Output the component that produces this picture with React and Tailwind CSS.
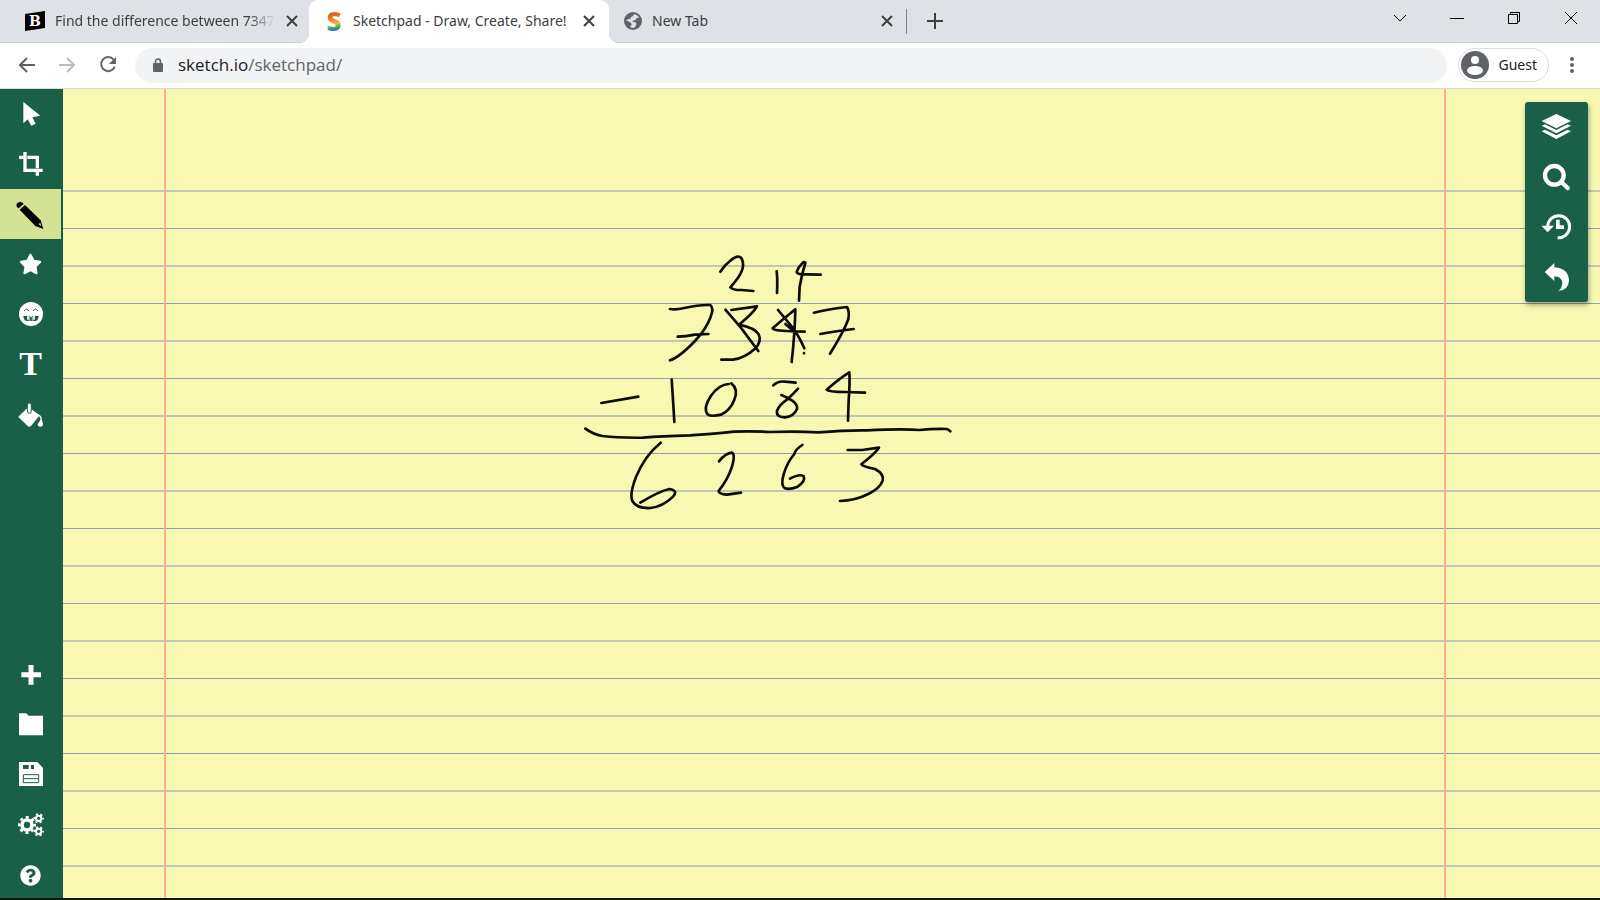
import { FaQuestionCircle, FaStar } from "react-icons/fa";

function ToolIcon({ children }) {
  return (
    <svg viewBox="0 0 81 84" className="w-[27px] h-7 overflow-visible" fill="currentColor">
      {children}
    </svg>
  );
}

function PanelIcon({ children }) {
  return (
    <svg viewBox="0 0 93 90" className="w-[31px] h-[30px]" fill="currentColor">
      {children}
    </svg>
  );
}

const drawTools = [
  {
    name: "Select",
    icon: (
      <ToolIcon>
        <path d="M19 6V70L32 58L43 77L56 71L46 52L70 47Z" />
      </ToolIcon>
    ),
  },
  {
    name: "Crop",
    icon: (
      <ToolIcon>
        <path d="M6 22H20M31 22H61V55M61 66V77M24 6V61H77" fill="none" stroke="currentColor" strokeWidth="10" />
      </ToolIcon>
    ),
  },
  {
    name: "Pencil",
    active: true,
    icon: (
      <ToolIcon>
        <path d="M-2 17Q-1 6 10 6L17 8L20 12L5 25L0 21Z" />
        <path d="M8 29L24 15L71 61L79 87L55 78Z" />
        <path d="M64 72L70 69L73 79Z" fill="#d5e48f" />
      </ToolIcon>
    ),
  },
  { name: "Shapes", icon: <FaStar className="w-[23px] h-[22px]" /> },
  {
    name: "Clipart",
    icon: (
      <ToolIcon>
        <circle cx="42" cy="42" r="36" />
        <g fill="none" stroke="#1a6048" strokeWidth="3" strokeLinecap="round">
          <path d="M22 32Q29 22 35 32M49 32Q56 22 62 32" />
        </g>
        <path d="M19 48H65Q64 63 54 63H30Q20 63 19 48Z" fill="#1a6048" />
        <path d="M33 48V59M42 48V51M51 48V59" stroke="currentColor" strokeWidth="5" />
        <path d="M38 50V63M46 50V63" stroke="currentColor" strokeWidth="2" />
      </ToolIcon>
    ),
  },
  { name: "Text", icon: <span className="font-['Liberation_Serif',serif] font-bold text-[34px] leading-none">T</span> },
  {
    name: "Fill",
    icon: (
      <ToolIcon>
        <path d="M4 50L34 21L68 46L42 78Q37 83 32 78L8 55Q5 52 4 50Z" />
        <rect x="31" y="9" width="12" height="31" rx="6" stroke="#1a6048" strokeWidth="3" />
        <path d="M58 45Q72 44 73 58" fill="none" stroke="currentColor" strokeWidth="4" />
        <path d="M73 54Q67 66 62 72A8 8 0 1 0 78 72Q76 64 73 54Z" />
      </ToolIcon>
    ),
  },
];

const fileTools = [
  {
    name: "New",
    icon: (
      <ToolIcon>
        <path d="M42 12V71M13 41H72" stroke="currentColor" strokeWidth="15" />
      </ToolIcon>
    ),
  },
  {
    name: "Open",
    icon: (
      <ToolIcon>
        <path d="M6 7H28L35 14H78V73H6Z" />
      </ToolIcon>
    ),
  },
  {
    name: "Save",
    icon: (
      <ToolIcon>
        <path d="M6 3H61L78 21V75H6Z" />
        <path d="M18 12H35V24H18ZM42 12H51V24H42Z" fill="#1a6048" />
        <path d="M19 41H65V65H19ZM19 53H65" fill="none" stroke="#1a6048" strokeWidth="3" />
      </ToolIcon>
    ),
  },
  {
    name: "Settings",
    icon: (
      <ToolIcon>
        <g fill="none" stroke="currentColor">
          <circle cx="30" cy="42" r="15" strokeWidth="11" />
          <circle cx="30" cy="42" r="23" strokeWidth="8" strokeDasharray="9.030" strokeDashoffset="4.500" />
          <circle cx="65" cy="22" r="8" strokeWidth="6" />
          <circle cx="65" cy="22" r="13" strokeWidth="5" strokeDasharray="6.800" strokeDashoffset="3.400" />
          <circle cx="65" cy="61" r="8" strokeWidth="6" />
          <circle cx="65" cy="61" r="13" strokeWidth="5" strokeDasharray="6.800" strokeDashoffset="3.400" />
        </g>
      </ToolIcon>
    ),
  },
  { name: "Help", icon: <FaQuestionCircle className="w-[21px] h-[21px]" /> },
];

const panelTools = [
  {
    name: "Layers",
    icon: (
      <PanelIcon>
        <path d="M46 6L90 27L46 49L2 27Z" />
        <path d="M2 41L12 37L46 54L80 37L90 41L46 64Z" />
        <path d="M2 58L12 53L46 70L80 53L90 58L46 81Z" />
      </PanelIcon>
    ),
  },
  {
    name: "Zoom",
    icon: (
      <PanelIcon>
        <g fill="none" stroke="currentColor" strokeWidth="13" strokeLinecap="round">
          <circle cx="40" cy="40" r="28" />
          <path d="M61 60L80 78" />
        </g>
      </PanelIcon>
    ),
  },
  {
    name: "History",
    icon: (
      <PanelIcon>
        <path d="M20 44A33 33 0 1 1 50 77" fill="none" stroke="currentColor" strokeWidth="9" />
        <path d="M1 41H39L20 61Z" />
        <path d="M45 23H56V40H69V51H45Z" />
      </PanelIcon>
    ),
  },
  {
    name: "Undo",
    icon: (
      <PanelIcon>
        <path d="M11 30L40 3V16Q84 20 84 57Q82 84 52 87Q63 79 64 62Q62 44 40 43V57Z" />
      </PanelIcon>
    ),
  },
];

function CloseIcon() {
  return (
    <svg viewBox="0 0 12 12" className="w-3 h-3" fill="none" stroke="#3c4043" strokeWidth="2">
      <path d="M1 1L11 11M11 1L1 11" />
    </svg>
  );
}

function GlobeIcon() {
  return (
    <svg viewBox="0 0 18 18" className="w-[18px] h-[18px] shrink-0">
      <circle cx="9" cy="9" r="9" fill="#5f6368" />
      <path d="M10 2Q14 3 15.500 6Q13 5 12 7Q12 8.500 9 8.500Q8 10 10 10Q12.500 10 12.500 12Q12 15 9 16Q6.500 16 6 14Q8.500 14 7 11Q5 9 2 8.500Q3 7 5 7Q7 7 7 5Q9 5 10 2Z" fill="#dee1e6" />
    </svg>
  );
}

function TabBar() {
  return (
    <header className="flex h-[43px] bg-[#dee1e6] border-b border-[#d0d3d8] text-sm text-[#3c4043]">
      <div className="w-[309px] flex items-center pb-px pl-[25px] pr-[13px]">
        <svg viewBox="0 0 20 20" className="w-5 h-5 shrink-0">
          <path d="M0 3L20 0V17L0 20Z" fill="#000" />
          <text x="10" y="15" textAnchor="middle" fill="#fff" fontSize="14" fontWeight="900" fontFamily="DejaVu Serif, serif">
            B
          </text>
        </svg>
        <span className="ml-[10px] flex-1 whitespace-nowrap [mask-image:linear-gradient(to_right,#000_88%,transparent)]">
          Find the difference between 7347
        </span>
        <button aria-label="Close tab" className="ml-[11px]">
          <CloseIcon />
        </button>
      </div>

      <div className="relative w-[300px] h-[43px] bg-white rounded-t-[9px] flex items-center pb-[2px] pl-[16px] pr-[14px] before:absolute before:bottom-0 before:-left-[9px] before:w-[9px] before:h-[9px] before:bg-[radial-gradient(circle_at_0_0,transparent_9px,white_9px)] after:absolute after:bottom-0 after:-right-[9px] after:w-[9px] after:h-[9px] after:bg-[radial-gradient(circle_at_100%_0,transparent_9px,white_9px)]">
        <span className="w-[18px] text-center font-['Open_Sans',sans-serif] font-extrabold text-[26px] leading-none text-transparent bg-clip-text bg-[linear-gradient(170deg,#e2662a_30%,#ee8a2b_45%,#f0bc35_60%,#6fb04a_70%,#2d7fc4_78%)]">
          S
        </span>
        <span className="ml-[10px] flex-1 whitespace-nowrap">Sketchpad - Draw, Create, Share!</span>
        <button aria-label="Close tab">
          <CloseIcon />
        </button>
      </div>

      <div className="w-[297px] flex items-center pb-px pl-[15px] pr-[13px]">
        <GlobeIcon />
        <span className="ml-[10px] flex-1">New Tab</span>
        <button aria-label="Close tab">
          <CloseIcon />
        </button>
      </div>
      <div className="w-px h-[25px] mt-[9px] bg-[#808387]" />
      <button aria-label="New tab" className="ml-5">
        <svg viewBox="0 0 16 16" className="w-4 h-4" stroke="#3c4043" strokeWidth="2">
          <path d="M8 0V16M0 8H16" />
        </svg>
      </button>

      <div className="ml-auto flex h-9 pr-px text-black">
        <button aria-label="Search tabs" className="w-[57px] flex items-center justify-center">
          <svg viewBox="0 0 14 14" className="w-[14px] h-[14px]" fill="none" stroke="currentColor">
            <path d="M1 4L7 10L13 4" />
          </svg>
        </button>
        <button aria-label="Minimize" className="w-[57px] flex items-center justify-center">
          <svg viewBox="0 0 14 14" className="w-[14px] h-[14px]" fill="none" stroke="currentColor">
            <path d="M0 7.500H14" />
          </svg>
        </button>
        <button aria-label="Restore" className="w-[57px] flex items-center justify-center">
          <svg viewBox="0 0 14 14" className="w-[14px] h-[14px]" fill="none" stroke="currentColor">
            <path d="M1.500 3.500H10.500V12.500H1.500ZM3.500 3.500V1.500H12.500V10.500H10.500" />
          </svg>
        </button>
        <button aria-label="Close" className="w-[57px] flex items-center justify-center">
          <svg viewBox="0 0 14 14" className="w-[14px] h-[14px]" fill="none" stroke="currentColor">
            <path d="M1 1L13 13M13 1L1 13" />
          </svg>
        </button>
      </div>
    </header>
  );
}

function AddressBar() {
  return (
    <nav className="flex items-center h-[46px] bg-white border-b border-[#dcdcc8] pb-px pl-[19px] pr-6">
      <button aria-label="Back" className="text-[#5f6368]">
        <svg viewBox="0 0 16 16" className="w-4 h-4" fill="none" stroke="currentColor" strokeWidth="2">
          <path d="M16 8H2M8 1L1 8L8 15" />
        </svg>
      </button>
      <button aria-label="Forward" className="ml-6 text-[#babcbe]">
        <svg viewBox="0 0 16 16" className="w-4 h-4" fill="none" stroke="currentColor" strokeWidth="2">
          <path d="M0 8H14M8 1L15 8L8 15" />
        </svg>
      </button>
      <button aria-label="Reload" className="ml-6 text-[#5f6368]">
        <svg viewBox="0 0 18 18" className="w-[18px] h-[18px]">
          <path d="M14.500 3.500A7 7 0 1 0 15.800 10.500" fill="none" stroke="currentColor" strokeWidth="2" />
          <path d="M17 1V8H10Z" fill="currentColor" />
        </svg>
      </button>
      <div className="ml-[18px] flex-1 h-[35px] rounded-full bg-[#f1f3f4] flex items-center pl-[17px]">
        <svg viewBox="0 0 12 14" className="w-3 h-[14px]">
          <rect x="1" y="5" width="10" height="9" rx="1" fill="#5f6368" />
          <path d="M3.500 6V3.500A2.500 2.500 0 0 1 8.500 3.500V6" fill="none" stroke="#5f6368" strokeWidth="1.500" />
        </svg>
        <span className="ml-[14px] font-['Open_Sans',sans-serif] text-[17px] text-[#5f6368]">
          <span className="text-[#202124]">sketch.io</span>/sketchpad/
        </span>
      </div>
      <button className="ml-[11px] h-[34px] rounded-full border border-[#dadce0] flex items-center pl-[2px] pr-[11px] text-sm text-[#202124]">
        <svg viewBox="0 0 28 28" className="w-7 h-7">
          <circle cx="14" cy="14" r="14" fill="#5f6368" />
          <circle cx="14" cy="9" r="4" fill="#fff" />
          <ellipse cx="14" cy="19.500" rx="8" ry="4.500" fill="#fff" />
        </svg>
        <span className="ml-[10px]">Guest</span>
      </button>
      <button aria-label="Menu" className="ml-[19px]">
        <svg viewBox="0 0 8 18" className="w-2 h-[18px]" fill="#5f6368">
          <circle cx="4" cy="3" r="2" />
          <circle cx="4" cy="9" r="2" />
          <circle cx="4" cy="15" r="2" />
        </svg>
      </button>
    </nav>
  );
}

function ToolButton({ tool }) {
  return (
    <button
      aria-label={tool.name}
      className={`w-[61px] h-[50px] flex items-center justify-center ${
        tool.active ? "bg-[#d3e295] text-black" : "text-white"
      }`}
    >
      {tool.icon}
    </button>
  );
}

function Handwriting() {
  return (
    <svg
      viewBox="0 0 1200 840"
      className="absolute left-[507px] top-[151px] w-[400px] h-[280px]"
      fill="none"
      stroke="#0b0b08"
      strokeWidth="8"
      strokeLinecap="round"
      strokeLinejoin="round"
    >
      {/* borrowed digits */}
      <path d="M451 95Q465 74 480 63Q503 43 514 54Q524 72 515 94Q508 112 481 142Q490 151 515 150L550 153" />
      <path d="M620 94Q623 115 621 159" />
      <path d="M706 69Q703 62 695 72Q684 82 680 96Q683 104 708 103L752 104M706 69Q696 100 689 140L687 182" />

      {/* 7347 with the 3 and 4 crossed out */}
      <path d="M300 207Q318 210 343 204Q386 194 421 195Q433 205 421 233Q408 267 375 303Q328 352 300 361M323 290Q347 290 375 284L415 282" />
      <path d="M484 210L561 199Q550 219 507 254Q555 264 566 283Q576 306 555 326Q524 354 489 359L454 359M466 209L512 262L565 333" />
      <path d="M676 208Q641 236 608 265Q608 272 648 273L704 275M676 208Q675 262 669 327L665 366M624 210L660 253Q684 281 703 325M646 252L672 274M702 339V340" />
      <path d="M732 218Q766 209 831 201Q839 214 835 238Q820 278 780 341M751 282Q790 274 851 267" />

      {/* minus 1084 */}
      <path d="M94 489L205 470" />
      <path d="M305 419Q308 460 313 546" />
      <path d="M476 432Q448 433 423 467Q398 505 413 523Q424 531 453 524Q481 511 493 479Q506 447 484 430" />
      <path d="M610 436Q625 422 646 425L677 428M634 465Q648 470 667 482Q684 495 681 507Q672 529 645 532Q618 533 621 512Q629 493 652 478Q669 463 684 446" />
      <path d="M838 397Q811 413 770 449Q776 456 824 456L885 458M838 397Q840 430 836 480L834 542" />

      {/* rule */}
      <path d="M46 566Q69 583 97 588Q144 594 220 593Q273 588 360 586Q420 583 492 575Q548 573 600 576Q680 573 745 577Q829 570 890 571Q1000 566 1048 570Q1088 566 1130 567Q1136 569 1141 574" />

      {/* 6263 */}
      <path d="M272 608Q224 647 198 711Q178 763 187 783Q200 806 241 804Q279 800 309 770Q326 751 298 747Q269 753 211 788" />
      <path d="M447 664Q466 640 486 638Q497 644 485 683Q474 717 446 753Q446 762 471 764L513 758" />
      <path d="M697 615Q675 629 673 642Q651 668 641 703Q631 736 645 745Q659 750 683 740Q707 724 701 709Q690 700 660 716" />
      <path d="M833 630H877L927 623Q915 640 874 673Q877 680 915 687Q943 702 938 722Q930 745 895 762Q855 782 810 783" />
    </svg>
  );
}

export default function App() {
  return (
    <div className="relative h-screen flex flex-col overflow-hidden font-['Noto_Sans',sans-serif]">
      <TabBar />
      <AddressBar />

      <div className="flex flex-1 min-h-0">
        <aside className="w-[63px] shrink-0 flex flex-col justify-between bg-[#1a6048]">
          <div>
            {drawTools.map((tool) => (
              <ToolButton key={tool.name} tool={tool} />
            ))}
          </div>
          <div>
            {fileTools.map((tool) => (
              <ToolButton key={tool.name} tool={tool} />
            ))}
          </div>
        </aside>

        {/* Legal pad */}
        <main className="relative flex-1 flex bg-[#f8f8b3]">
          <div className="flex-1 mt-[101px] bg-[repeating-linear-gradient(to_bottom,#c1c8b2_0px,#c1c8b2_2px,transparent_2px,transparent_38px,#8fa0ac_38px,#8fa0ac_39px,transparent_39px,transparent_75px)]" />
          <div className="absolute inset-y-0 left-[101px] right-[154px] border-x-2 border-[#feab98]" />
          <Handwriting />

          <div className="absolute top-[13px] right-3 w-[63px] rounded-[3px] bg-[#1a6048] shadow-[1px_3px_5px_rgba(0,0,0,0.35)]">
            {panelTools.map((tool) => (
              <button
                key={tool.name}
                aria-label={tool.name}
                className="w-full h-[50px] flex items-center justify-center text-white"
              >
                {tool.icon}
              </button>
            ))}
          </div>
        </main>
      </div>
      <div className="absolute inset-x-0 bottom-0 h-[2px] bg-[#10140f]" />
    </div>
  );
}
